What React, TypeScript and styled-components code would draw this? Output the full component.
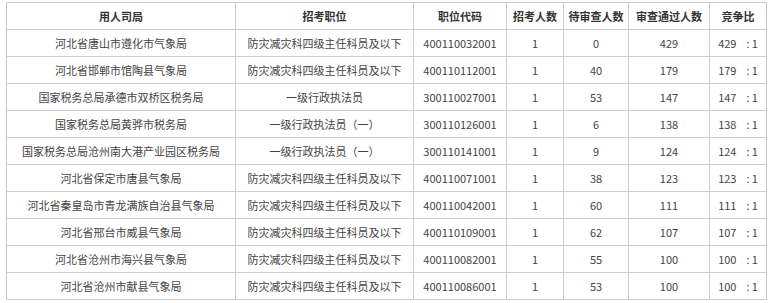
import React from "react";
import styled, { createGlobalStyle } from "styled-components";

const Global = createGlobalStyle`
  html, body { margin: 0; padding: 0; background: #fff; }
  body { font-family: "Noto Sans CJK SC", "Noto Sans", sans-serif; }
`;

const Wrap = styled.div`
  padding: 2px 0 0 6px;
`;

const Table = styled.table`
  border-collapse: collapse;
  table-layout: fixed;
  width: 761px;
  font-size: 11px;
  color: #444;
`;

const Th = styled.th`
  border: 1px solid #ccc;
  height: 26px;
  padding: 0;
  font-weight: 700;
  color: #333;
  text-align: center;
  white-space: nowrap;
  overflow: hidden;
`;

const Td = styled.td`
  border: 1px solid #ccc;
  height: 26px;
  padding: 0;
  text-align: center;
  white-space: nowrap;
  overflow: hidden;
`;

const RatioSep = styled.span`
  margin-left: 10px;
`;

const widths = [229, 178, 93, 57, 65, 81, 57];
const headers = ["用人司局", "招考职位", "职位代码", "招考人数", "待审查人数", "审查通过人数", "竞争比"];

const rows: [string, string, string, number, number, number][] = [
  ["河北省唐山市遵化市气象局", "防灾减灾科四级主任科员及以下", "400110032001", 1, 0, 429],
  ["河北省邯郸市馆陶县气象局", "防灾减灾科四级主任科员及以下", "400110112001", 1, 40, 179],
  ["国家税务总局承德市双桥区税务局", "一级行政执法员", "300110027001", 1, 53, 147],
  ["国家税务总局黄骅市税务局", "一级行政执法员（一）", "300110126001", 1, 6, 138],
  ["国家税务总局沧州南大港产业园区税务局", "一级行政执法员（一）", "300110141001", 1, 9, 124],
  ["河北省保定市唐县气象局", "防灾减灾科四级主任科员及以下", "400110071001", 1, 38, 123],
  ["河北省秦皇岛市青龙满族自治县气象局", "防灾减灾科四级主任科员及以下", "400110042001", 1, 60, 111],
  ["河北省邢台市威县气象局", "防灾减灾科四级主任科员及以下", "400110109001", 1, 62, 107],
  ["河北省沧州市海兴县气象局", "防灾减灾科四级主任科员及以下", "400110082001", 1, 55, 100],
  ["河北省沧州市献县气象局", "防灾减灾科四级主任科员及以下", "400110086001", 1, 53, 100],
];

export default function App() {
  return (
    <Wrap>
      <Global />
      <Table>
        <colgroup>
          {widths.map((w, i) => (
            <col key={i} style={{ width: w }} />
          ))}
        </colgroup>
        <thead>
          <tr>
            {headers.map((h) => (
              <Th key={h}>{h}</Th>
            ))}
          </tr>
        </thead>
        <tbody>
          {rows.map((r) => (
            <tr key={r[2]}>
              <Td>{r[0]}</Td>
              <Td>{r[1]}</Td>
              <Td>{r[2]}</Td>
              <Td>{r[3]}</Td>
              <Td>{r[4]}</Td>
              <Td>{r[5]}</Td>
              <Td>
                {r[5]}
                <RatioSep>{":\u20091"}</RatioSep>
              </Td>
            </tr>
          ))}
        </tbody>
      </Table>
    </Wrap>
  );
}
